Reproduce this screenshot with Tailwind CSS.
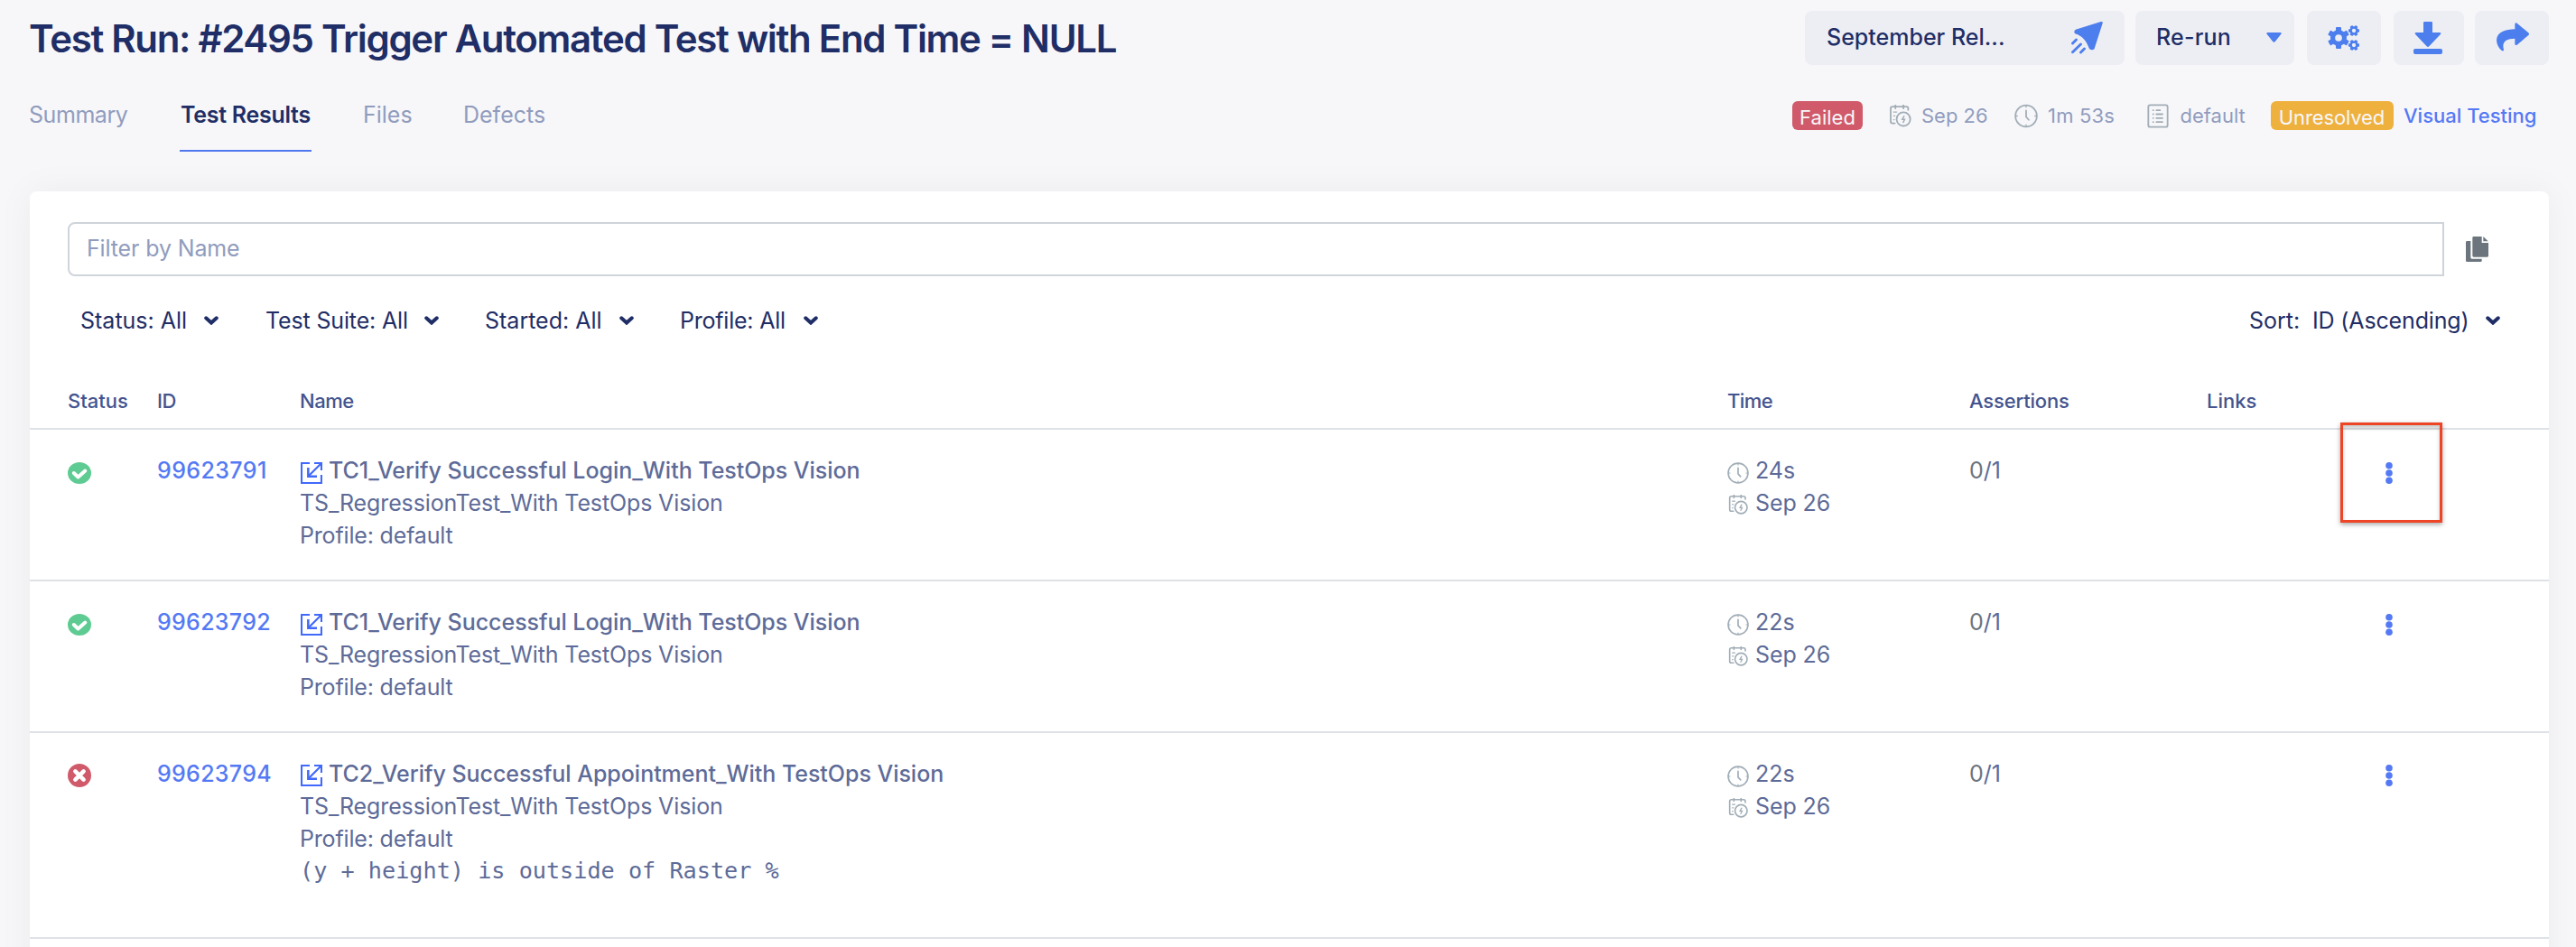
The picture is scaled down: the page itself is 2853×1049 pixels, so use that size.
<!DOCTYPE html>
<html lang="en">
<head>
<meta charset="utf-8">
<title>Test Run #2495</title>
<script src="https://cdn.jsdelivr.net/npm/@tailwindcss/browser@4"></script>
</head>
<body class="h-[1049px] overflow-hidden bg-[#f7f7fa] font-['Inter',sans-serif] text-[25px] leading-9 text-[#1f2e66] whitespace-nowrap">
<svg class="hidden">
  <symbol id="calendar" viewBox="399 349 73 75">
    <g fill="none" stroke="#a1adb6" stroke-width="5.500" stroke-linecap="round">
      <path d="M416 411H408Q402 411 402 405V361Q402 355 408 355H455Q461 355 461 361V366"/>
      <path d="M418 350V361M445 350V361"/>
      <path d="M412 373H422M412 386H416M412 399H414" stroke-width="4"/>
      <circle cx="445" cy="397" r="23"/>
      <path d="M447 387L441 398H449L444 408" stroke-width="4.5"/>
    </g>
  </symbol>
  <symbol id="clock" viewBox="812 347 80 80">
    <g fill="none" stroke="#a1adb6" stroke-width="5.500" stroke-linecap="round">
      <circle cx="852" cy="387" r="36.5"/>
      <path d="M852 352V357M852 417V422M817 387H822M882 387H887" stroke-width="4"/>
      <path d="M852 368V390L861 400"/>
    </g>
  </symbol>
  <symbol id="list" viewBox="1254 347 72 80">
    <g fill="none" stroke="#a1adb6" stroke-width="5.500" stroke-linecap="round">
      <rect x="1258" y="350.500" width="64" height="73" rx="6"/>
      <path d="M1274 368H1274.500M1285 368H1297M1274 381H1274.500M1285 381H1305M1274 394H1274.500M1285 394H1305M1274 407H1274.500M1285 407H1305"/>
    </g>
  </symbol>
  <symbol id="open" viewBox="879 66 72 72">
    <g fill="none" stroke="#4169fb" stroke-width="6.500">
      <path d="M909 69H882V135H948V108"/>
      <path d="M924 69H948V93M948 69L906 111"/>
      <path d="M904 84V113H933" stroke-width="7.500"/>
    </g>
  </symbol>
  <symbol id="chevron" viewBox="0 0 16 10"><path d="M2.200 2.300L8 7.600L13.800 2.300" fill="none" stroke="#1f2e66" stroke-width="4" stroke-linecap="round" stroke-linejoin="miter"/></symbol>
  <symbol id="passed" viewBox="0 0 26 24"><ellipse cx="13" cy="12" rx="13" ry="12" fill="#5ecb92"/><path d="M6.800 12L11.500 16.500L19.300 9.500" fill="none" stroke="#fff" stroke-width="4" stroke-linecap="round" stroke-linejoin="round"/></symbol>
  <symbol id="failed" viewBox="0 0 26 26"><circle cx="13" cy="13" r="13" fill="#d05a6a"/><path d="M8.400 8.400L17.600 17.600M17.600 8.400L8.400 17.600" fill="none" stroke="#fff" stroke-width="4.600" stroke-linecap="round"/></symbol>
  <symbol id="kebab" viewBox="0 0 8 24"><g fill="#5479f4"><circle cx="4" cy="3.800" r="3.800"/><circle cx="4" cy="12" r="3.800"/><circle cx="4" cy="20.200" r="3.800"/></g></symbol>
</svg>

<header class="flex h-[212px] flex-col pt-3 pl-8">
  <div class="flex h-[60px] shrink-0">
    <h1 class="h-[60px] text-[42px] leading-[61px] font-semibold tracking-[-1.31px]">Test Run: #2495 Trigger Automated Test with End Time = NULL</h1>
    <div class="mr-[30px] ml-auto flex font-medium leading-[58px]">
      <button class="flex h-[60px] w-[354px] items-start rounded-lg bg-[#edeef4] pl-6 text-left">
        <span class="w-[270px]">September Rel...</span>
        <svg class="mt-[11px] h-[37px] w-[37px]" viewBox="1000 69 110 111"><path d="M1101 72L1017 98Q1009 104 1015 112C1040 120 1052 135 1062 161Q1070 170 1079 163L1107 76Q1107 71 1101 72Z" fill="#4c7eee"/><path d="M1019 132L1007 144M1034 147L1007 173M1046 162L1034 174" fill="none" stroke="#4c7eee" stroke-width="8.500" stroke-linecap="round"/></svg>
      </button>
      <button class="ml-3 flex h-[60px] w-44 items-start rounded-lg bg-[#edeef4] pl-[23px] text-left">
        <span class="w-[122px] tracking-[0.2px]">Re-run</span>
        <svg class="mt-6 h-[11px] w-[17px]" viewBox="331 108 50 33"><path d="M335 108H377Q383 109 379 114L360 138Q356 142 352 138L333 114Q329 109 335 108Z" fill="#4c7eee"/></svg>
      </button>
      <button class="ml-3.5 flex h-[60px] w-[82px] items-start rounded-lg bg-[#edeef4] pl-[23px]">
        <svg class="mt-4 h-7 w-[36px]" viewBox="534 84 108 84">
          <g fill="#4c7eee"><circle cx="570" cy="126" r="27"/><rect x="561" y="90" width="18" height="72" rx="3"/><rect x="561" y="90" width="18" height="72" rx="3" transform="rotate(60 570 126)"/><rect x="561" y="90" width="18" height="72" rx="3" transform="rotate(120 570 126)"/>
          <circle cx="621" cy="102" r="14"/><rect x="616" y="84" width="10" height="36" rx="2" transform="rotate(30 621 102)"/><rect x="616" y="84" width="10" height="36" rx="2" transform="rotate(90 621 102)"/><rect x="616" y="84" width="10" height="36" rx="2" transform="rotate(150 621 102)"/>
          <circle cx="621" cy="150" r="14"/><rect x="616" y="132" width="10" height="36" rx="2" transform="rotate(30 621 150)"/><rect x="616" y="132" width="10" height="36" rx="2" transform="rotate(90 621 150)"/><rect x="616" y="132" width="10" height="36" rx="2" transform="rotate(150 621 150)"/></g>
          <g fill="#edeef4"><circle cx="570" cy="126" r="11.500"/><circle cx="621" cy="102" r="6.500"/><circle cx="621" cy="150" r="6.500"/></g>
        </svg>
      </button>
      <button class="ml-3.5 flex h-[60px] w-[78px] items-start rounded-lg bg-[#edeef4] pl-[22px]">
        <svg class="mt-3 h-9 w-8" viewBox="819 72 96 108"><path d="M856 72H878Q882 72 882 76V108H906Q913 109 908 115L871 154Q867 158 863 154L826 115Q821 109 828 108H852V76Q852 72 856 72Z" fill="#4c7eee"/><rect x="819" y="162" width="96" height="18" rx="6" fill="#4c7eee"/></svg>
      </button>
      <button class="ml-3 flex h-[60px] w-[82px] items-start rounded-lg bg-[#edeef4] pl-6">
        <svg class="mt-[13px] h-8 w-9" viewBox="1095 75 108 96"><path d="M1156 80Q1158 74 1163 77L1201 109Q1205 113 1201 117L1163 149Q1157 152 1156 147V128C1125 128 1112 140 1119 165Q1119 172 1112 168C1100 158 1095 145 1095 133C1097 105 1125 98 1156 97Z" fill="#4c7eee"/></svg>
      </button>
    </div>
  </div>

  <div class="flex">
    <nav class="flex pt-[37px] text-[#919cbd]">
      <a class="w-[167px] tracking-[-0.44px]">Summary</a>
      <a class="h-[59px] w-[146px] border-b-2 border-[#5078ee] pl-px font-semibold tracking-[-0.28px] text-[#1f2e66]">Test Results</a>
      <a class="ml-[57px] w-[111px]">Files</a>
      <a>Defects</a>
    </nav>
    <div class="mt-10 ml-auto flex h-8 w-[868px] items-center text-[22px] leading-8 text-[#919cbd]">
      <span class="h-8 w-[78px] rounded-md bg-[#d05a6a] pt-0.5 text-center text-[#f7f7fa]">Failed</span>
      <svg class="ml-[30px] h-[25px] w-6"><use href="#calendar"/></svg>
      <span class="ml-[11px] w-[75px]">Sep 26</span>
      <svg class="ml-7 h-[27px] w-[26px]"><use href="#clock"/></svg>
      <span class="ml-[11px] w-[73px] tracking-[0.2px]">1m 53s</span>
      <svg class="ml-[37px] h-[27px] w-6"><use href="#list"/></svg>
      <span class="ml-[12.500px] w-[72px]">default</span>
      <span class="ml-7 h-8 w-[136px] rounded-md bg-[#efb13e] pt-0.5 text-center tracking-[-0.12px] text-[#f7f7fa]">Unresolved</span>
      <a class="ml-[11.500px] font-medium text-[#5479f4]">Visual Testing</a>
    </div>
  </div>
</header>

<main class="relative mr-[30px] ml-[33px] h-[900px] rounded-lg bg-white pt-[34px] shadow-[0_0_40px_rgba(30,30,40,0.05)]">
  <div class="flex pl-[42px]">
    <div class="h-[60px] w-[2632px] rounded-l-lg border-2 border-[#ced4da] pl-[19px] leading-[55px] tracking-[-0.14px] text-[#919cbd]">Filter by Name</div>
    <svg class="mt-4 ml-6 h-7 w-[25px]" viewBox="842 96 75 84"><g fill="#6c757d"><path d="M842 115q0-4 4-4h12v55q0 4 4 4h33v6q0 4-4 4h-45q-4 0-4-4z"/><path d="M864 100q0-4 4-4h27v21h22v43q0 4-4 4h-45q-4 0-4-4z"/><path d="M900 96l16 16h-16z"/></g></svg>
  </div>

  <div class="flex h-[108px] items-start pt-[31px] pr-[54px] pl-14">
    <span class="w-[137px]">Status: All</span><svg class="mt-[13px] h-2.5 w-4"><use href="#chevron"/></svg>
    <span class="ml-[52px] w-44 tracking-[-0.15px]">Test Suite: All</span><svg class="mt-[13px] h-2.5 w-4"><use href="#chevron"/></svg>
    <span class="ml-[51px] w-[149px]">Started: All</span><svg class="mt-[13px] h-2.5 w-4"><use href="#chevron"/></svg>
    <span class="ml-[51px] w-[137px] tracking-[-0.22px]">Profile: All</span><svg class="mt-[13px] h-2.5 w-4"><use href="#chevron"/></svg>
    <span class="ml-auto w-[70px]">Sort:</span><span class="w-[192px] tracking-[-0.15px]">ID (Ascending)</span><svg class="mt-[13px] h-2.5 w-4"><use href="#chevron"/></svg>
  </div>

  <div class="grid h-[62px] grid-cols-[99px_158px_1581px_268px_263px_1fr] border-b-2 border-[#dee2e6] pl-[42px] text-[22px] leading-[60px] font-medium text-[#44548f]">
    <span>Status</span><span class="tracking-[-0.4px]">ID</span><span class="tracking-[-0.5px]">Name</span><span class="tracking-[-0.6px]">Time</span><span class="tracking-[-0.17px]">Assertions</span><span>Links</span>
  </div>

  <div class="grid h-[168px] grid-cols-[99px_158px_1581px_268px_460px_1fr] border-b-2 border-[#dee2e6] pt-[27px] pl-[42px] text-[#5e6b98]">
    <svg class="mt-[9px] h-6 w-[26px]"><use href="#passed"/></svg>
    <a class="font-medium tracking-[0.4px] text-[#5479f4]">99623791</a>
    <div>
      <div class="flex font-medium tracking-[-0.03px]"><svg class="mt-[9px] mr-[7px] ml-px h-6 w-6"><use href="#open"/></svg>TC1_Verify Successful Login_With TestOps Vision</div>
      <div class="tracking-[-0.13px]">TS_RegressionTest_With TestOps Vision</div>
      <div class="tracking-[-0.17px]">Profile: default</div>
    </div>
    <div>
      <div class="flex"><svg class="mt-[9px] mr-[7px] h-6 w-6"><use href="#clock"/></svg>24s</div>
      <div class="flex tracking-[-0.1px]"><svg class="mt-[9px] mr-[7px] ml-px h-[22px] w-[23px]"><use href="#calendar"/></svg>Sep 26</div>
    </div>
    <div><span class="text-[#6c757d]">0</span>/1</div>
    <svg class="mt-[9px] ml-px h-6 w-2"><use href="#kebab"/></svg>
  </div>

  <div class="grid h-[168px] grid-cols-[99px_158px_1581px_268px_460px_1fr] border-b-2 border-[#dee2e6] pt-[27px] pl-[42px] text-[#5e6b98]">
    <svg class="mt-[9px] h-6 w-[26px]"><use href="#passed"/></svg>
    <a class="font-medium tracking-[0.3px] text-[#5479f4]">99623792</a>
    <div>
      <div class="flex font-medium tracking-[-0.03px]"><svg class="mt-[9px] mr-[7px] ml-px h-6 w-6"><use href="#open"/></svg>TC1_Verify Successful Login_With TestOps Vision</div>
      <div class="tracking-[-0.13px]">TS_RegressionTest_With TestOps Vision</div>
      <div class="tracking-[-0.17px]">Profile: default</div>
    </div>
    <div>
      <div class="flex"><svg class="mt-[9px] mr-[7px] h-6 w-6"><use href="#clock"/></svg>22s</div>
      <div class="flex tracking-[-0.1px]"><svg class="mt-[9px] mr-[7px] ml-px h-[22px] w-[23px]"><use href="#calendar"/></svg>Sep 26</div>
    </div>
    <div><span class="text-[#6c757d]">0</span>/1</div>
    <svg class="mt-[9px] ml-px h-6 w-2"><use href="#kebab"/></svg>
  </div>

  <div class="grid h-[228px] grid-cols-[99px_158px_1581px_268px_460px_1fr] border-b-2 border-[#dee2e6] pt-[27px] pl-[42px] text-[#5e6b98]">
    <svg class="mt-[7px] h-[26px] w-[26px]"><use href="#failed"/></svg>
    <a class="font-medium tracking-[0.3px] text-[#5479f4]">99623794</a>
    <div>
      <div class="flex font-medium tracking-[-0.03px]"><svg class="mt-[7px] mr-[7px] ml-px h-[26px] w-6" preserveAspectRatio="none"><use href="#open"/></svg>TC2_Verify Successful Appointment_With TestOps Vision</div>
      <div class="tracking-[-0.13px]">TS_RegressionTest_With TestOps Vision</div>
      <div class="tracking-[-0.17px]">Profile: default</div>
      <div class="font-['DejaVu_Sans_Mono',monospace] text-[25.2px]">(y + height) is outside of Raster %</div>
    </div>
    <div>
      <div class="flex"><svg class="mt-[9px] mr-[7px] h-6 w-6"><use href="#clock"/></svg>22s</div>
      <div class="flex tracking-[-0.1px]"><svg class="mt-[9px] mr-[7px] ml-px h-[22px] w-[23px]"><use href="#calendar"/></svg>Sep 26</div>
    </div>
    <div><span class="text-[#6c757d]">0</span>/1</div>
    <svg class="mt-[8px] ml-px h-6 w-2"><use href="#kebab"/></svg>
  </div>

  <!-- callout around the first row's actions menu -->
  <div class="absolute top-[256px] left-[2559px] h-[111px] w-[113px] border-3 border-[#ee4527] shadow-[0_2px_5px_rgba(0,0,0,0.35),inset_0_3px_4px_rgba(0,0,0,0.22)]"></div>
</main>
</body>
</html>
